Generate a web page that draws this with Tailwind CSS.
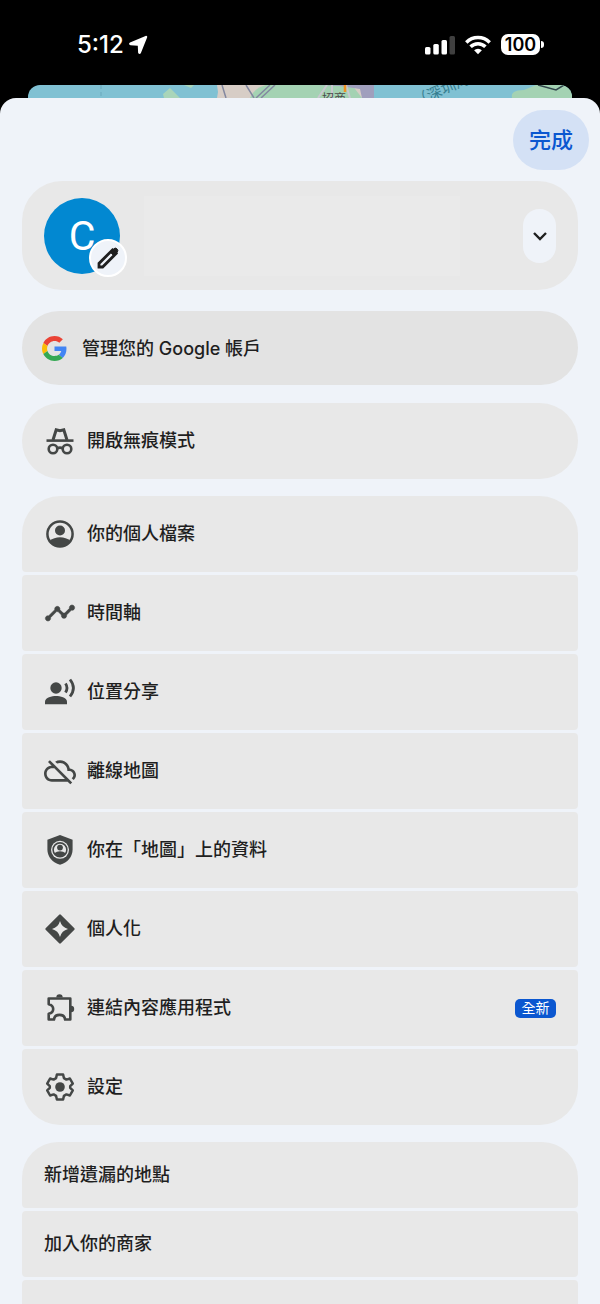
<!DOCTYPE html>
<html lang="zh-Hant">
<head>
    <meta charset="UTF-8">
    <meta name="viewport" content="width=device-width,initial-scale=1">
    <title>帳戶選單</title>
    <script src="https://cdn.jsdelivr.net/npm/@tailwindcss/browser@4"></script>
</head>
<body class="bg-black font-['Inter','Noto_Sans_CJK_TC',sans-serif] text-[#1f1f1f]">
<div class="h-screen flex flex-col overflow-hidden">

    <!-- status bar -->
    <header class="h-[85px] shrink-0 flex items-center justify-between pl-[77px] pr-14 pt-1 text-white">
        <div class="flex items-center gap-1">
            <span class="text-2xl font-medium">5:12</span>
            <svg class="w-5 h-5" viewBox="0 0 20 20" fill="currentColor"><path d="M17.600 1c1-.5 2 .4 1.500 1.500L12.900 18c-.6 1.400-2.700 1.200-2.800-.5L9.800 10.700 2.500 10.300C.9 10.200.5 8.300 2 7.600z"/></svg>
        </div>
        <div class="flex items-center">
            <svg class="w-[30px] h-5" viewBox="0 0 30 20" fill="currentColor">
                <rect x="0" y="12" width="5.500" height="7.500" rx="1.500"/>
                <rect x="8.300" y="9" width="5.500" height="10.500" rx="1.500"/>
                <rect x="16.500" y="5" width="5.500" height="14.500" rx="1.500"/>
                <rect x="24.500" y="1" width="5.500" height="18.500" rx="1.500" opacity=".25"/>
            </svg>
            <svg class="w-[26px] h-5 ml-[10px]" viewBox="0 0 26 20" fill="none" stroke="currentColor" stroke-width="3.500">
                <path d="M1.300 7.400a16.600 16.600 0 0 1 23.400 0"/>
                <path d="M5.600 11.800a10.400 10.400 0 0 1 14.800 0"/>
                <path d="M13 19.200l-3.900-3.900a5.500 5.500 0 0 1 7.800 0z" fill="currentColor" stroke="none"/>
            </svg>
            <div class="ml-[10px] h-[21px] w-[39px] rounded-[7px] bg-white text-black text-lg leading-none font-semibold flex items-center justify-center">100</div>
            <div class="ml-px w-[3px] h-[7px] rounded-r-full bg-white"></div>
        </div>
    </header>

    <!-- map peeking out behind the sheet -->
    <div class="h-[13px] shrink-0 mx-7 rounded-t-xl overflow-hidden bg-[#80c1d3]">
        <svg class="w-full h-[13px]" viewBox="0 0 544 13" preserveAspectRatio="xMidYMin slice">
            <path d="M73 0v13" stroke="#6ba9bd" stroke-dasharray="4 3"/>
            <path d="M135 9l7-6 10 10h-16z" fill="#a9d5b9"/>
            <path d="M156 0h10l-3 3z" fill="#a9d5b9"/>
            <path d="M189 0h157v13H189l1-6z" fill="#d7cdc6"/>
            <path d="M222 13q4-10 16-13h86l10 13z" fill="#a4d2b3"/>
            <path d="M290 0h56v13h-12l-2-9-20-3z" fill="#a09fbd"/>
            <path d="M194 0l4 13M218 0l8 13M228 13l14-13M233 13l14-13" stroke="#8388a0" stroke-width="1.500" fill="none"/>
            <path d="M290 13l9-13M304 13V0M322 13l-4-13" stroke="#c9c8d0" stroke-width="2" fill="none"/>
            <path d="M317 0v7" stroke="#ef9323" stroke-width="2.500"/>
            <text x="294" y="18" font-size="12" fill="#4b4b4b">招商</text>
            <text x="388" y="22" font-size="15" fill="#377f91" transform="rotate(-24 388 22)">（深圳灣）</text>
            <path d="M484 13q-2-8 12-8l12-5h36v13z" fill="#a4d2b3"/>
            <path d="M510 0l18 5 8-5" stroke="#32474c" stroke-width="1.500" fill="none"/>
        </svg>
    </div>

    <main class="grow min-h-0 overflow-hidden rounded-t-2xl bg-[#eff3f9] px-[22px] pt-3">
        <div class="flex justify-end -mr-[11px]">
            <button class="h-[60px] w-[76px] rounded-[30px] bg-[#d4e1f5] text-[#0b57d0] text-[22px] font-medium">完成</button>
        </div>

        <section class="mt-[11px] h-[109px] rounded-[40px] bg-[#e8e8e8] flex items-center justify-between px-[22px]">
            <div class="relative size-[76px] rounded-full bg-[#0288d1] flex items-center justify-center text-white">
                <span class="font-[Roboto] text-[41px] leading-none pt-0.5">C</span>
                <button aria-label="編輯相片" class="absolute -right-[7px] -bottom-[3px] size-[38px] rounded-full border-2 border-white bg-[#eff3f9] text-[#1f1f1f] flex items-center justify-center">
                    <svg class="w-6 h-6" viewBox="0 0 24 24"><path d="M3 21v-3.600L16.500 3.900l3.600 3.600L6.600 21z" fill="none" stroke="currentColor" stroke-width="2.800"/><path d="M14.300 6.200l3.500-3.500a2.500 2.500 0 0 1 3.500 3.500l-3.500 3.500z" fill="currentColor" stroke="currentColor"/></svg>
                </button>
            </div>
            <div class="grow ml-6 mr-[63px] h-20 bg-[#eaeaea]"></div>
            <button aria-label="展開帳戶清單" class="w-[33px] h-[54px] rounded-full bg-[#eff3f9] flex items-center justify-center">
                <svg class="w-4 h-4" viewBox="0 0 16 16" fill="none" stroke="currentColor" stroke-width="2.400"><path d="M2 5l6 6 6-6"/></svg>
            </button>
        </section>

        <a href="#" class="mt-[21px] h-[74px] rounded-full bg-[#e3e3e3] flex items-center gap-[15px] px-5 text-lg font-medium">
            <svg class="w-[25px] h-[25px]" viewBox="0 0 48 48">
                <path fill="#EA4335" d="M24 9.500c3.540 0 6.710 1.220 9.210 3.600l6.850-6.850C35.900 2.380 30.470 0 24 0 14.620 0 6.510 5.380 2.560 13.220l7.980 6.190C12.430 13.720 17.740 9.500 24 9.500z"/>
                <path fill="#4285F4" d="M46.980 24.550c0-1.570-.15-3.090-.38-4.550H24v9.020h12.940c-.58 2.960-2.260 5.480-4.780 7.180l7.730 6c4.510-4.180 7.090-10.360 7.090-17.650z"/>
                <path fill="#FBBC05" d="M10.530 28.590c-.48-1.450-.76-2.990-.76-4.590s.27-3.140.76-4.590l-7.980-6.190C.92 16.460 0 20.120 0 24s.92 7.540 2.560 10.780z"/>
                <path fill="#34A853" d="M24 48c6.480 0 11.930-2.130 15.890-5.810l-7.730-6c-2.150 1.450-4.920 2.300-8.160 2.300-6.260 0-11.570-4.220-13.470-9.910l-7.980 6.190C6.510 42.620 14.620 48 24 48z"/>
            </svg>
            <span class="pt-0.5">管理您的 Google 帳戶</span>
        </a>

        <button class="mt-[18px] w-full h-[76px] rounded-full bg-[#e8e8e8] flex items-center gap-[11px] px-[22px] text-lg font-medium">
            <svg class="w-8 h-8 text-[#444746]" viewBox="0 0 32 32" fill="none" stroke="currentColor" stroke-width="2.600">
                <path d="M2.500 15.600h27"/><path d="M9 15l3.200-10.200 3.800.9 3.800-.9L23 15" stroke-width="3"/>
                <circle cx="9" cy="24" r="4.300"/><circle cx="23" cy="24" r="4.300"/><path d="M13 23.400q3-1.500 6 0"/>
            </svg>
            開啟無痕模式
        </button>

        <nav class="mt-[17px] flex flex-col gap-[3px] text-lg font-medium">
            <a href="#" class="h-[76px] rounded-t-[38px] rounded-b bg-[#e8e8e8] flex items-center gap-[11px] px-[22px]">
                <svg class="w-8 h-8 text-[#444746]" viewBox="0 0 32 32" fill="currentColor">
                    <circle cx="16" cy="16" r="12.600" fill="none" stroke="currentColor" stroke-width="2.500"/>
                    <circle cx="16" cy="12.500" r="5"/><path d="M5.500 23q4.500-3.700 10.500-3.700T26.500 23A12.600 12.600 0 0 1 5.500 23z"/>
                </svg>
                你的個人檔案
            </a>
            <a href="#" class="h-[76px] rounded bg-[#e8e8e8] flex items-center gap-[11px] px-[22px]">
                <svg class="w-8 h-8 text-[#444746]" viewBox="0 0 24 24" fill="currentColor" stroke="currentColor" stroke-width=".4"><path d="M23 8c0 1.100-.9 2-2 2-.18 0-.35-.02-.51-.07l-3.560 3.550c.05.16.07.34.07.52 0 1.100-.9 2-2 2s-2-.9-2-2c0-.18.02-.36.07-.52l-2.550-2.550c-.16.05-.34.07-.52.07s-.36-.02-.52-.07l-4.550 4.560c.05.16.07.33.07.51 0 1.100-.9 2-2 2s-2-.9-2-2 .9-2 2-2c.18 0 .35.02.51.07l4.560-4.550C8.020 9.360 8 9.180 8 9c0-1.100.9-2 2-2s2 .9 2 2c0 .18-.02.36-.07.52l2.550 2.550c.16-.05.34-.07.52-.07s.36.02.52.07l3.550-3.560C19.020 8.350 19 8.180 19 8c0-1.100.9-2 2-2s2 .9 2 2z"/></svg>
                時間軸
            </a>
            <a href="#" class="h-[76px] rounded bg-[#e8e8e8] flex items-center gap-[11px] px-[22px]">
                <svg class="w-8 h-8 text-[#444746]" viewBox="0 0 32 32" fill="currentColor">
                    <circle cx="12" cy="12" r="5.700"/><path d="M1 28.300v-2.800c0-4 7-5.600 11-5.600s11 1.600 11 5.600v2.800z"/>
                    <path d="M21.500 7.500q3 4.500 0 9M26 3.500q6.800 8.500 0 17" fill="none" stroke="currentColor" stroke-width="2.800"/>
                </svg>
                位置分享
            </a>
            <a href="#" class="h-[76px] rounded bg-[#e8e8e8] flex items-center gap-[11px] px-[22px]">
                <svg class="w-8 h-8 text-[#444746]" viewBox="0 0 24 24" fill="currentColor"><path d="M24 15c0-2.640-2.050-4.780-4.650-4.960C18.670 6.590 15.640 4 12 4c-1.330 0-2.570.36-3.650.97l1.490 1.490C10.510 6.170 11.230 6 12 6c3.040 0 5.500 2.460 5.500 5.500v.5H19c1.660 0 3 1.340 3 3 0 .99-.48 1.850-1.210 2.400l1.410 1.410c1.090-.92 1.800-2.270 1.800-3.810zM4.410 3.860L3 5.270l2.770 2.770h-.42C2.340 8.360 0 10.910 0 14c0 3.310 2.690 6 6 6h11.730l2 2 1.410-1.410L4.410 3.860zM6 18c-2.210 0-4-1.790-4-4s1.790-4 4-4h1.730l8 8H6z"/></svg>
                離線地圖
            </a>
            <a href="#" class="h-[76px] rounded bg-[#e8e8e8] flex items-center gap-[11px] px-[22px]">
                <svg class="w-8 h-8 text-[#444746]" viewBox="0 0 32 32" fill="currentColor">
                    <path d="M16 1l12.600 4.700v9.800c0 7-5 13.300-12.600 15.300C8.400 28.800 3.400 22.500 3.400 15.500V5.700z"/>
                    <circle cx="16" cy="15.800" r="9" fill="#e8e8e8"/>
                    <circle cx="16" cy="15.800" r="6.900" fill="none" stroke="currentColor" stroke-width="1.600"/>
                    <circle cx="16" cy="13.600" r="2.900"/>
                    <path d="M10.300 19.300q2.500-2 5.700-2t5.700 2A7 7 0 0 1 10.300 19.300z"/>
                </svg>
                你在「地圖」上的資料
            </a>
            <a href="#" class="h-[76px] rounded bg-[#e8e8e8] flex items-center gap-[11px] px-[22px]">
                <svg class="w-8 h-8 text-[#444746]" viewBox="0 0 32 32" fill="currentColor">
                    <path d="M16 2.500L29.500 16 16 29.500 2.500 16z" stroke="currentColor" stroke-width="2.400" stroke-linejoin="round"/>
                    <path d="M16 8q1.700 6.300 8 8-6.300 1.700-8 8-1.700-6.300-8-8 6.300-1.700 8-8z" fill="#e8e8e8"/>
                </svg>
                個人化
            </a>
            <a href="#" class="h-[76px] rounded bg-[#e8e8e8] flex items-center gap-[11px] px-[22px]">
                <svg class="w-8 h-8 text-[#444746]" viewBox="0 0 32 32" fill="none" stroke="currentColor" stroke-width="2.600" stroke-linejoin="round">
                    <path d="M4.700 6.500h21.600v21h-5.200c-.3-3-2.200-4.600-5.600-4.600s-5.200 1.600-5.500 4.600H4.700v-5.700c3-.7 4.500-2.300 4.500-4.800s-1.500-4.100-4.500-4.800z"/>
                    <path d="M12.300 5.500a3.200 3.200 0 0 1 6.400 0zM27 13.800a3.200 3.200 0 0 1 0 6.400z" fill="currentColor" stroke="none"/>
                </svg>
                連結內容應用程式
                <span class="ml-auto h-[19px] w-[41px] rounded-[5px] bg-[#0b57d0] text-white text-sm leading-none font-normal flex items-center justify-center">全新</span>
            </a>
            <a href="#" class="h-[76px] rounded-t rounded-b-[38px] bg-[#e8e8e8] flex items-center gap-[11px] px-[22px]">
                <svg class="w-8 h-8 text-[#444746]" viewBox="0 0 32 32" fill="none" stroke="currentColor" stroke-width="2.500" stroke-linejoin="round">
                    <path d="M12.900 3.500h6.200l.8 3.600 2.500 1.500 3.500-1.100 2.900 5.100-2.600 2.600v1.600l2.600 2.600-2.900 5.100-3.500-1.100-2.500 1.500-.8 3.600h-6.200l-.8-3.600-2.500-1.500-3.500 1.100-2.900-5.100 2.600-2.600v-1.600l-2.600-2.600 2.900-5.100 3.500 1.100 2.500-1.500z"/>
                    <circle cx="16" cy="16" r="4.800" fill="currentColor" stroke="none"/>
                </svg>
                設定
            </a>
        </nav>

        <nav class="mt-[17px] flex flex-col gap-[3px] text-lg font-medium">
            <a href="#" class="h-[66px] rounded-t-[36px] rounded-b bg-[#e8e8e8] flex items-center px-[22px]">新增遺漏的地點</a>
            <a href="#" class="h-[66px] rounded bg-[#e8e8e8] flex items-center px-[22px]">加入你的商家</a>
            <div class="h-[66px] rounded bg-[#e8e8e8]"></div>
        </nav>
    </main>
</div>
</body>
</html>
